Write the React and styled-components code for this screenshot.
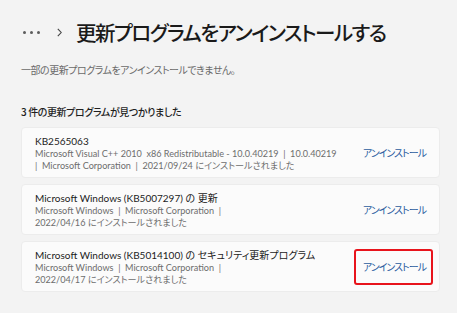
import React from "react";
import styled, { createGlobalStyle } from "styled-components";

const Global = createGlobalStyle`
  html, body { margin: 0; padding: 0; background: #f3f3f3; }
  body {
    font-family: "Lato", "Noto Sans CJK JP", sans-serif;
    font-feature-settings: "palt";
    color: #1b1b1b;
  }
`;

const Page = styled.div`
  width: 457px;
  height: 313px;
  box-sizing: border-box;
  padding: 14px 17px 0 21px;
  overflow: hidden;
`;

const Header = styled.div`
  display: flex;
  align-items: center;
  height: 36px;
`;

const Dots = styled.span`
  display: inline-flex;
  gap: 4px;
  margin-left: 2px;
  & > i {
    width: 3px;
    height: 3px;
    border-radius: 50%;
    background: #5c5c5c;
  }
`;

const Chevron = styled.svg`
  margin-left: 17px;
  margin-right: 14px;
`;

const Title = styled.h1`
  margin: 0;
  font-family: "Noto Sans CJK JP", sans-serif;
  font-weight: 500;
  font-size: 20.5px;
  letter-spacing: -1.5px;
  white-space: nowrap;
  color: #1a1a1a;
`;

const Note = styled.p`
  margin: 12px 0 0;
  font-family: "Noto Sans CJK JP", sans-serif;
  font-size: 10px;
  letter-spacing: -0.5px;
  color: #6a6a6a;
`;

const Count = styled.p`
  margin: 27px 0 8px;
  font-family: "Noto Sans CJK JP", sans-serif;
  font-size: 10px;
  letter-spacing: -0.4px;
  font-weight: 500;
  color: #1f1f1f;
`;

const List = styled.div`
  display: flex;
  flex-direction: column;
  gap: 6px;
`;

const Card = styled.div`
  display: flex;
  align-items: center;
  justify-content: space-between;
  gap: 8px;
  height: 51px;
  box-sizing: border-box;
  padding: 0 6px 0 13px;
  background: #fbfbfb;
  border: 1px solid #ececec;
  border-radius: 4px;
`;

const Info = styled.div`
  display: flex;
  flex-direction: column;
  flex: 1;
  min-width: 0;
`;

const Name = styled.div`
  font-size: 10px;
  line-height: 14px;
  white-space: nowrap;
  color: #1b1b1b;
`;

const Meta = styled.div`
  font-size: 9.1px;
  line-height: 12px;
  color: #6d6d6d;
  white-space: pre;
`;

const Action = styled.button`
  flex-shrink: 0;
  background: none;
  border: 2px solid ${(p) => (p.$highlight ? "#e8141c" : "transparent")};
  border-radius: 3px;
  padding: 0 5px 0 7px;
  height: 36px;
  font-family: "Noto Sans CJK JP", sans-serif;
  font-feature-settings: "palt";
  font-size: 10px;
  letter-spacing: -1px;
  color: #2a5b9e;
  cursor: pointer;
`;

const items = [
  {
    name: "KB2565063",
    meta: [
      "Microsoft Visual C++ 2010  x86 Redistributable - 10.0.40219  |  10.0.40219",
      "|  Microsoft Corporation  |  2021/09/24 にインストールされました",
    ],
  },
  {
    name: "Microsoft Windows (KB5007297) の 更新",
    meta: ["Microsoft Windows  |  Microsoft Corporation  |", "2022/04/16 にインストールされました"],
  },
  {
    name: "Microsoft Windows (KB5014100) の セキュリティ更新プログラム",
    meta: ["Microsoft Windows  |  Microsoft Corporation  |", "2022/04/17 にインストールされました"],
    highlight: true,
  },
];

export default function App() {
  return (
    <>
      <Global />
      <Page>
        <Header>
          <Dots>
            <i />
            <i />
            <i />
          </Dots>
          <Chevron width="5" height="9" viewBox="0 0 5 9">
            <path d="M0.8 0.8 L4.2 4.5 L0.8 8.2" fill="none" stroke="#444" strokeWidth="1.1" />
          </Chevron>
          <Title>更新プログラムをアンインストールする</Title>
        </Header>
        <Note>一部の更新プログラムをアンインストールできません。</Note>
        <Count>3 件の更新プログラムが見つかりました</Count>
        <List>
          {items.map((it) => (
            <Card key={it.name}>
              <Info>
                <Name>{it.name}</Name>
                {it.meta.map((m) => (
                  <Meta key={m}>{m}</Meta>
                ))}
              </Info>
              <Action $highlight={it.highlight}>アンインストール</Action>
            </Card>
          ))}
        </List>
      </Page>
    </>
  );
}
